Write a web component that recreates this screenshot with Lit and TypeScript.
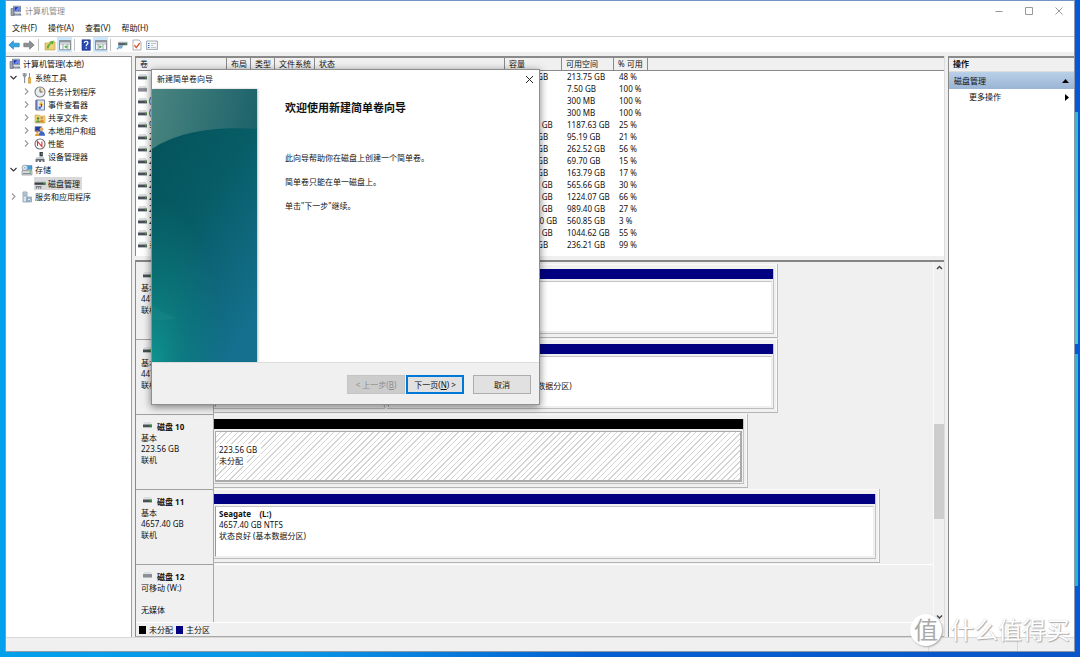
import { LitElement, html, css, svg, nothing } from "lit";
import { customElement, property } from "lit/decorators.js";

const icon = (body: unknown) => svg`<svg viewBox="0 0 12 12" width="12" height="12" aria-hidden="true">${body}</svg>`;

const drive = (online = true) => svg`<svg viewBox="0 0 9 6" width="9" height="6" aria-hidden="true">
  <path d="M1 0h7l1 2.5H0z" fill="#dcdfe2"/><path d="M0 2.5h9V5H0z" fill="#4a4f55"/><path d="M0 5h9v1H0z" fill="#b8bcc0"/>
  ${online ? svg`<path d="M7 2.7h1.6v1.8H7z" fill="#2fb52f"/>` : svg`<path d="M0 2.5h9V5H0z" fill="#8a8e94"/>`}</svg>`;

const icons: Record<string, unknown> = {
  computer: icon(svg`<path d="M1 3.5h3v7H1z" fill="#9aa7b8" stroke="#5b6675" stroke-width=".6"/><path d="M3.5 1.2h7v5.6h-7z" fill="#c9cede" stroke="#5a6680" stroke-width=".7"/><path d="M4.5 2.1h5v3.8h-5z" fill="#1f36b8"/><path d="M5 5.5 8.5 2.1h1v2L8 5.9z" fill="#6f8df0"/><path d="M4 8.2h6.5l1 2.3H3z" fill="#707989"/><path d="M5 8.8h4.6" stroke="#dde"/>`),
  tools: icon(svg`<path d="M3.6 1v4M2.3 1.2v2.2L3.6 5 5 3.4V1.2M3.6 5v6" stroke="#8c929c" stroke-width="1.2" fill="none"/><path d="M8.5 1v5" stroke="#8a8f98" stroke-width="1"/><path d="M7.4 5.6h2.2v5.6H7.4z" fill="#f2b233" stroke="#b87d14" stroke-width=".5"/>`),
  clock: icon(svg`<circle cx="6" cy="6" r="5" fill="#e9edf2" stroke="#7c7f86" stroke-width="1.1"/><path d="M6 2a4 4 0 0 1 4 4H6z" fill="#f3dfaa"/><path d="M6 2.5V6h2.6" stroke="#555" stroke-width=".9" fill="none"/>`),
  events: icon(svg`<path d="M2 1h8.5v10H2z" fill="#dfe5f5" stroke="#56648f" stroke-width=".8"/><path d="M1.5 1h2v10h-2z" fill="#6676ac"/><path d="M7 2.2 9.3 6H4.8z" fill="#f2c12e"/><path d="M7.4 5v3.2" stroke="#cf2222" stroke-width="1.3"/><circle cx="5.7" cy="8.7" r="1.3" fill="#3569ca"/>`),
  shared: icon(svg`<path d="M1 3h4l1 1h5v7H1z" fill="#efcf74" stroke="#c9a64a" stroke-width=".6"/><circle cx="4" cy="6.4" r="1.2" fill="#3d8a3f"/><path d="M2 10.4c0-3 4-3 4 0z" fill="#4aa04c"/><circle cx="7.8" cy="6" r="1.2" fill="#c98f65"/><path d="M5.9 10.4c0-3.4 4-3.4 4 0z" fill="#d4883c"/>`),
  users: icon(svg`<path d="M1 1.5h6.5v5H1z" fill="#27409f" stroke="#8794b0" stroke-width=".7"/><circle cx="7.5" cy="4.2" r="1.9" fill="#e2ab6d"/><path d="M4.6 10.8c0-6 6.4-6 6.4 0z" fill="#3e63c8"/><circle cx="3.3" cy="6.8" r="1.3" fill="#c98d58"/><path d="M1 11c0-3.6 4.5-3.6 4.5 0z" fill="#d7a13a"/>`),
  perf: icon(svg`<circle cx="6" cy="6" r="5" fill="#fff" stroke="#6f6f75" stroke-width="1.1"/><path d="M3.5 8v-4.500l4.400 5v-5" stroke="#d03434" stroke-width="1.1" fill="none"/>`),
  devices: icon(svg`<path d="M5.5 1h3.4v4.4H5.5z" fill="#3b4048"/><path d="M7.8 2v2" stroke="#41c141" stroke-width="1"/><path d="M2.5 6h7.3l.7 2h-9z" fill="#c8ccd2"/><path d="M1.6 8h8.9v2.9H8.6V9.4H7.2v1.5H5V9.4H3.6v1.5h-2z" fill="#686d75"/>`),
  storage: icon(svg`<path d="M5 1.500h6v4H5z" fill="#3f9bd6" stroke="#5a7f9c" stroke-width=".5"/><circle cx="3.800" cy="3.800" r="2.800" fill="#d7e6f0" stroke="#75828c" stroke-width=".6"/><circle cx="3.800" cy="3.800" r=".8" fill="#8aa"/><path d="M1 6.500h10V11H1z" fill="#d4d7da" stroke="#7b8086" stroke-width=".6"/><path d="M2 9.500h8" stroke="#81868c" stroke-width=".9"/><path d="M9.300 7.200v1.400" stroke="#3bb83b" stroke-width="1.300"/>`),
  disk: icon(svg`<path d="M2 3.2h9L11.600 4.500H.6z" fill="#c3c7cb"/><path d="M.6 4.500h11v2.300H.6z" fill="#3b4045"/><path d="M9.600 4.800h1.500v1.600H9.600z" fill="#2fb52f"/><path d="M1.800 8h5.600v2.800H6.100V9.200H5.100v1.600H4V9.200H3v1.600H1.800z" fill="#7b8087"/>`),
  services: icon(svg`<path d="M2 1h4v10H2z" fill="#dbe4ec" stroke="#71879c" stroke-width=".7"/><path d="M2.7 3h2.6M2.7 4.8h2.6" stroke="#6d8eb0" stroke-width=".8"/><path d="M6 6h4.5v5H6z" fill="#b9cfe2" stroke="#6a86a3" stroke-width=".6"/><circle cx="8" cy="8.5" r="1.3" fill="#fff" stroke="#54789c" stroke-width=".6"/>`),
  back: icon(svg`<path d="M.8 6 5.4 1.800v2.400h5.800v3.600H5.400v2.400z" fill="#35a5e0" stroke="#1877b4" stroke-width=".6"/>`),
  forward: icon(svg`<path d="M11.2 6 6.600 1.800v2.400H.8v3.600h5.800v2.400z" fill="#8d8f92" stroke="#66686b" stroke-width=".6"/>`),
  folderUp: icon(svg`<path d="M1 4h3.5l1-1H11v8H1z" fill="#ecd07a" stroke="#b5983a" stroke-width=".6"/><path d="M2.800 9.500c0-3 1.400-4.600 3.700-5.200L5.800 2.700l4-1.200-1 3.900-1-1C5.800 5.600 4.700 7 4.700 9.500z" fill="#58ab35"/>`),
  paneLeft: icon(svg`<path d="M.5 1.500h11v9.300H.5z" fill="#f3f5f6" stroke="#7d858c" stroke-width=".9"/><path d="M.5 1.500h11v2H.5z" fill="#8f979e"/><path d="M1 5h10" stroke="#a3aab0" stroke-width=".8"/><path d="M4 5v5.500M8.800 5v5.500" stroke="#8f979e" stroke-width=".8"/><path d="M7.800 6.200v3.200L5.200 7.800z" fill="#35a535"/>`),
  paneRight: icon(svg`<path d="M.5 1.500h11v9.300H.5z" fill="#f3f5f6" stroke="#7d858c" stroke-width=".9"/><path d="M.5 1.500h11v2H.5z" fill="#8f979e"/><path d="M1 5h10" stroke="#a3aab0" stroke-width=".8"/><path d="M3.200 5v5.500M8 5v5.500" stroke="#8f979e" stroke-width=".8"/><path d="M4.400 6.200v3.200L7 7.800z" fill="#35a535"/>`),
  help: icon(svg`<path d="M2 .8h8.3v10.5H2z" fill="#2b49b5" stroke="#192f82" stroke-width=".6"/><path d="M4.4 4c0-2.4 3.6-2.2 3.5-.1C7.900 5.300 6.200 5.200 6.200 7.200M6.200 8.500v1.300" stroke="#fff" stroke-width="1.200" fill="none"/>`),
  connect: icon(svg`<path d="M2.500 3h8.800v3.200H2z" fill="#59616a"/><path d="M2.600 2.800h8.600L11 4H3z" fill="#a9b4bd"/><path d="M9.300 4.300h1.300v1.300H9.300z" fill="#37bd37"/><path d="M.8 10.200 4.500 7M3 6.800h3.400l-1 2H2.500z" stroke="#6ea5cc" stroke-width="1.200" fill="#9fc6e2"/>`),
  check: icon(svg`<path d="M2 1h6l2 2v8H2z" fill="#fff" stroke="#8b8f95" stroke-width=".7"/><path d="M3.400 6.200 5.200 8.600 8.800 4" stroke="#e0562b" stroke-width="1.300" fill="none"/>`),
  props: icon(svg`<path d="M.6 2h10.800v8.400H.6z" fill="#f5f8fb" stroke="#8a9299" stroke-width=".8"/><path d="M2 4.500h1.500M2 6.500h1.500M2 8.500h1.500" stroke="#3674bb" stroke-width="1"/><path d="M5 4.500h5M5 6.500h2.500M5 8.500h5" stroke="#b0b6bb" stroke-width=".8"/>`),
};

interface Node { label: string; icon: string; open?: boolean; leaf?: boolean; selected?: boolean; children?: Node[]; }

const tree: Node = {
  label: "计算机管理(本地)", icon: "computer", open: true,
  children: [
    { label: "系统工具", icon: "tools", open: true, children: [
      { label: "任务计划程序", icon: "clock" },
      { label: "事件查看器", icon: "events" },
      { label: "共享文件夹", icon: "shared" },
      { label: "本地用户和组", icon: "users" },
      { label: "性能", icon: "perf" },
      { label: "设备管理器", icon: "devices", leaf: true },
    ] },
    { label: "存储", icon: "storage", open: true, children: [
      { label: "磁盘管理", icon: "disk", leaf: true, selected: true },
    ] },
    { label: "服务和应用程序", icon: "services" },
  ],
};

const volumes: [string, string, string, string][] = [
  ["", "446.00 GB", "213.75 GB", "48 %"],
  ["", "7.50 GB", "7.50 GB", "100 %"],
  ["(", "300 MB", "300 MB", "100 %"],
  ["(", "300 MB", "300 MB", "100 %"],
  ["9", "4657.40 GB", "1187.63 GB", "25 %"],
  ["2", "446.50 GB", "95.19 GB", "21 %"],
  ["2", "465.76 GB", "262.52 GB", "56 %"],
  ["2", "465.76 GB", "69.70 GB", "15 %"],
  ["2", "931.51 GB", "163.79 GB", "17 %"],
  ["2", "1863.01 GB", "565.66 GB", "30 %"],
  ["2", "1863.01 GB", "1224.07 GB", "66 %"],
  ["2", "3726.02 GB", "989.40 GB", "27 %"],
  ["2", "16764.00 GB", "560.85 GB", "3 %"],
  ["2", "1863.01 GB", "1044.62 GB", "55 %"],
  ["系", "238.46 GB", "236.21 GB", "99 %"],
];

interface Part { name?: string; size: string; status: string; free?: boolean; share: number; }
interface Disk { title: string; lines: string[]; online: boolean; width?: number; parts: Part[]; }

const disks: Disk[] = [
  { title: "磁盘 8", lines: ["基本", "447.13 GB", "联机"], online: true, width: 78.5,
    parts: [{ size: "447.13 GB NTFS", status: "状态良好 (基本数据分区)", share: 1 }] },
  { title: "磁盘 9", lines: ["基本", "447.13 GB", "联机"], online: true, width: 78.5,
    parts: [
      { size: "300 MB", status: "状态良好 (EFI 系统分区)", share: 171 },
      { name: "(C:)", size: "446.50 GB NTFS", status: "状态良好 (启动, 页面文件, 故障转储, 基本数据分区)", share: 388 },
    ] },
  { title: "磁盘 10", lines: ["基本", "223.56 GB", "联机"], online: true, width: 74.3,
    parts: [{ size: "223.56 GB", status: "未分配", free: true, share: 1 }] },
  { title: "磁盘 11", lines: ["基本", "4657.40 GB", "联机"], online: true, width: 92.6,
    parts: [{ name: "Seagate    (L:)", size: "4657.40 GB NTFS", status: "状态良好 (基本数据分区)", share: 1 }] },
  { title: "磁盘 12", lines: ["可移动 (W:)", "", "无媒体"], online: false, parts: [] },
];

const shared = css`
  :host, *, *::before, *::after { box-sizing: border-box; }
  button { font: inherit; color: inherit; border: 0; padding: 0; margin: 0; background: none; }
  svg { display: block; flex: none; }
`;

@customElement("console-tree")
class ConsoleTree extends LitElement {
  static styles = [shared, css`
    :host { display: block; background: #fff; border-top: 1px solid #8c8c8c; border-right: 1px solid #a0a0a0; overflow: hidden; }
    ul { list-style: none; margin: 0; padding: 0; }
    .group { padding-top: 1px; }
    .row { display: flex; align-items: center; height: 13px; padding-left: 3px; line-height: 13px; white-space: nowrap; }
    .level-2 { padding-left: 16px; }
    .toggle { width: 9px; margin-right: 3px; height: 9px; display: grid; place-items: center; }
    .item { display: flex; align-items: center; gap: 2px; height: 13px; padding-right: 2px; }
    .selected { background: #d9d9d9; }
  `];
  private node(n: Node, level: number): unknown {
    const arrow = n.open ? svg`<path d="M1.500 3 4.500 6 7.500 3" />` : svg`<path d="M3 1.500 6 4.500 3 7.500" />`;
    return html`<li role="treeitem">
      <div class="row level-${level}">
        ${level ? html`<button class="toggle" aria-label=${n.label} ?disabled=${n.leaf}>${n.leaf ? nothing
          : html`<svg viewBox="0 0 9 9" width="9" height="9" fill="none" stroke=${n.open ? "#333" : "#999"} stroke-width="1.1">${arrow}</svg>`}</button>` : nothing}
        <span class="item ${n.selected ? "selected" : ""}">${icons[n.icon]}${n.label}</span>
      </div>
      ${n.children ? html`<ul class="group" role="group">${n.children.map((c) => this.node(c, level + 1))}</ul>` : nothing}
    </li>`;
  }
  render() { return html`<ul role="tree">${this.node(tree, 0)}</ul>`; }
}

@customElement("volume-list")
class VolumeList extends LitElement {
  static styles = [shared, css`
    :host { display: block; background: #fff; border-top: 2px solid #8a8a8a; border-left: 1px solid #8a8a8a; padding-bottom: 5px; overflow: hidden; }
    table { width: 100%; table-layout: fixed; border-collapse: separate; border-spacing: 0; line-height: 12px; }
    th { height: 13px; padding: 0 0 0 4px; font-weight: 400; text-align: left; background: #f0f0f0; border-right: 1px solid #8a8a8a; border-bottom: 1px solid #8a8a8a; white-space: nowrap; }
    th:last-child { border-right: 0; }
    td { height: 12px; padding: 0 0 0 5px; white-space: nowrap; }
    td:first-child { padding-left: 2px; }
    .name { display: flex; align-items: center; gap: 2px; }
    .w-name { width: 91px; } .w-short { width: 24px; } .w-fs { width: 40px; } .w-state { width: 190px; }
    .w-cap { width: 57px; } .w-free { width: 52px; } .w-pct { width: 34px; }
  `];
  render() {
    return html`<table>
      <colgroup><col class="w-name"><col class="w-short"><col class="w-short"><col class="w-fs"><col class="w-state"><col class="w-cap"><col class="w-free"><col class="w-pct"><col></colgroup>
      <thead><tr>${["卷", "布局", "类型", "文件系统", "状态", "容量", "可用空间", "% 可用", ""].map((h) => html`<th>${h}</th>`)}</tr></thead>
      <tbody>${volumes.map(([name, cap, free, pct], i) => html`<tr>
        <td><span class="name">${drive(i !== 1)}<span>${name}</span></span></td>
        <td></td><td></td><td></td><td></td><td>${cap}</td><td>${free}</td><td>${pct}</td><td></td></tr>`)}</tbody>
    </table>`;
  }
}

@customElement("disk-map")
class DiskMap extends LitElement {
  static styles = [shared, css`
    :host { display: flex; flex-direction: column; min-height: 0; background: #f0f0f0; border-top: 2px solid #858585; border-left: 1px solid #8a8a8a; border-bottom: 1px solid #a8a8a8; }
    .view { flex: 1; min-height: 0; display: grid; grid-template-columns: 1fr 11px; }
    .disks { min-height: 0; overflow: hidden; padding-top: 2px; }
    .disk { display: grid; grid-template-columns: 78px 1fr; height: 75px; }
    .disk + .disk .label { border-top: 1px solid #a0a0a0; }
    .disk:last-child .graph { border-top: 1px solid #fff; }
    .label { padding: 6px 0 0 5px; border-right: 1px solid #a8a8a8; line-height: 11px; white-space: nowrap; }
    .disk + .disk .label { padding-top: 5px; }
    .title { display: flex; align-items: center; gap: 5px; height: 12px; padding-left: 2px; font-weight: 700; }
    .title svg { margin-bottom: 3px; }
    .line { height: 11px; }
    .frame { display: flex; gap: 2px; height: 74px; padding: 5px 3px 3px 0; border-right: 1px solid #bcbcbc; border-bottom: 1px solid #b4b4b4; box-shadow: inset -1px 1px #fafafa; }
    .part { min-width: 0; flex-basis: 0; display: flex; flex-direction: column; gap: 2px; border-right: 1px solid #c4c4c4; border-bottom: 1px solid #bcbcbc; }
    .bar { height: 10px; background: #000080; }
    .free .bar { background: #000; }
    .box { flex: 1; margin: 0 1px 1px 1px; padding: 1px 0 0 3px; background: #fff; border: 1px solid #c4c4c4; border-left-color: #999; border-right-color: #eee; border-bottom-color: #eee; line-height: 11px; white-space: pre; overflow: hidden; }
    .free .box { border: 1px solid #aaa; border-right-width: 2px; border-bottom-width: 2px; background: repeating-linear-gradient(135deg, #fff 0 3px, #d4d4d4 3px 4px); }
    .name { height: 11px; font-weight: 700; }
    .free .line { width: max-content; background: #fff; padding-right: 4px; }
    .scroll { display: flex; flex-direction: column; align-items: center; justify-content: space-between; background: #f0f0f0; border-left: 1px solid #fafafa; padding: 2px 0; }
    .track { flex: 1; align-self: stretch; display: grid; grid-template-rows: 151fr 94fr 93fr; }
    .thumb { grid-row: 2; background: #cdcdcd; }
    .legend { display: flex; align-items: center; gap: 3px; height: 14px; padding-left: 3px; border-top: 1px solid #fff; line-height: 13px; }
    .swatch { width: 7px; height: 8px; background: #000; }
    .swatch.primary { background: #000080; }
  `];
  private part(p: Part) {
    return html`<div class="part ${p.free ? "free" : ""}" style="flex-grow:${p.share}">
      <div class="bar"></div>
      <div class="box"><div class="name">${p.name ?? ""}</div><div class="line">${p.size}</div><div class="line">${p.status}</div></div>
    </div>`;
  }
  render() {
    return html`<div class="view">
        <div class="disks">${disks.map((d) => html`<section class="disk">
          <div class="label"><div class="title">${drive(d.online)}<span>${d.title}</span></div>${d.lines.map((l) => html`<div class="line">${l}</div>`)}</div>
          <div class="graph">${d.width ? html`<div class="frame" style="width:${d.width}%">${d.parts.map((p) => this.part(p))}</div>` : nothing}</div>
        </section>`)}</div>
        <div class="scroll">
          <button aria-label="向上滚动"><svg viewBox="0 0 7 7" width="7" height="7" fill="none" stroke="#444" stroke-width="1.4"><path d="M1 5 3.500 2.500 6 5"/></svg></button>
          <div class="track"><div class="thumb"></div></div>
          <button aria-label="向下滚动"><svg viewBox="0 0 7 7" width="7" height="7" fill="none" stroke="#444" stroke-width="1.4"><path d="M1 2.500 3.500 5 6 2.500"/></svg></button>
        </div>
      </div>
      <div class="legend"><span class="swatch"></span>未分配<span class="swatch primary"></span>主分区</div>`;
  }
}

@customElement("volume-wizard")
class VolumeWizard extends LitElement {
  @property() heading = "欢迎使用新建简单卷向导";
  static styles = [shared, css`
    :host { display: flex; flex-direction: column; background: #fff; border: 1px solid #8f8f8f; box-shadow: 0 2px 8px rgba(0, 0, 0, .5); }
    header { display: flex; align-items: center; justify-content: space-between; height: 19px; padding: 0 5px; line-height: 17px; }
    header span { height: 19px; }
    .main { flex: 1; display: grid; grid-template-columns: 105px 1fr; min-height: 0; }
    .art { width: 100%; height: 100%; box-shadow: 1px 0 2px #bbb; }
    .copy { padding: 11px 28px; line-height: 12px; }
    h1 { margin: 0 0 36px; font-size: 11px; line-height: 16px; font-weight: 700; }
    p { margin: 0 0 12px; }
    footer { display: flex; align-items: center; justify-content: flex-end; height: 42px; padding: 2px 8px 0 0; background: #f0f0f0; border-top: 1px solid #dcdcdc; }
    .btn { width: 58px; height: 19px; background: #e1e1e1; border: 1px solid #adadad; line-height: 15px; white-space: pre; }
    .btn:disabled { background: #ccc; border-color: #c4c4c4; color: #8c8c8c; }
    .primary { margin: 0 9px 0 1px; border: 2px solid #0078d7; }
  `];
  render() {
    return html`<header><span>新建简单卷向导</span>
        <button aria-label="关闭"><svg viewBox="0 0 9 9" width="9" height="9" stroke="#222" stroke-width="1"><path d="M1 1 8 8M8 1 1 8"/></svg></button></header>
      <div class="main">
        <svg class="art" viewBox="0 0 106 274" preserveAspectRatio="none" aria-hidden="true">
          <defs>
            <linearGradient id="top" x1="0" y1="0" x2="1" y2=".5"><stop offset="0" stop-color="#4a8580"/><stop offset="1" stop-color="#155c67"/></linearGradient>
            <linearGradient id="deep" x1="0" y1="0" x2=".7" y2="1"><stop offset="0" stop-color="#04535a"/><stop offset=".45" stop-color="#075c66"/><stop offset="1" stop-color="#14708e"/></linearGradient>
            <radialGradient id="glow" cx="0" cy="1" r=".7"><stop offset="0" stop-color="#0f9390"/><stop offset=".5" stop-color="#0c8582" stop-opacity=".5"/><stop offset="1" stop-color="#0c8080" stop-opacity="0"/></radialGradient>
          </defs>
          <path d="M0 0h106v274H0z" fill="url(#top)"/>
          <path d="M0 60C24 44 60 37 106 40v234H0z" fill="url(#deep)"/>
          <path d="M0 60C24 44 60 37 106 40v234H0z" fill="url(#glow)"/>
          <path d="M0 217q12 9 26 13-14 3-26 2z" fill="#fff" opacity=".03"/>
        </svg>
        <div class="copy"><h1>${this.heading}</h1><p>此向导帮助你在磁盘上创建一个简单卷。</p><p>简单卷只能在单一磁盘上。</p><p>单击"下一步"继续。</p></div>
      </div>
      <footer><button class="btn" disabled>&lt; 上一步(<u>B</u>)</button><button class="btn primary">下一页(<u>N</u>) &gt;</button><button class="btn">取消</button></footer>`;
  }
}

@customElement("app-root")
class AppRoot extends LitElement {
  static styles = [shared, css`
    :host {
      display: block; position: relative; height: 100vh; padding: 0 5px 5px; overflow: hidden;
      font: 8px/12px "Noto Sans", "Noto Sans CJK SC", sans-serif; color: #111;
      background:
        linear-gradient(#2fb9cf, #45cbd0) right 2px top 112px / 3px 232px no-repeat,
        linear-gradient(#2fb9cf, #22b8cf) right 2px top 354px / 3px 232px no-repeat,
        linear-gradient(90deg, #03a0ec, #0a94e4 28%, #0560d2 55%, #0a55c8) left bottom / 100% 6px no-repeat,
        linear-gradient(90deg, #03a0ee 50%, #0558d8 50%);
    }
    .window { display: flex; flex-direction: column; height: 100%; background: #f0f0f0; border: 1px solid #8b9aab; border-top-color: #7094c4; }
    .titlebar { display: flex; align-items: center; height: 19px; padding: 0 11px 0 4px; background: #fff; color: #8c8c8c; }
    .titlebar .caption { display: flex; align-items: center; gap: 3px; flex: 1; }
    .controls { display: flex; gap: 22px; }
    .menu { display: flex; gap: 11px; height: 17px; padding: 0 6px; background: #fff; border-bottom: 1px solid #cfcfcf; }
    .toolbar { display: flex; align-items: center; height: 15px; padding-left: 0; background: #fff; }
    .tool { width: 15px; height: 15px; display: grid; place-items: center; }
    .tool.on { background: #cce8ff; }
    .sep { width: 1px; height: 12px; margin: 0 3px 0 2px; background: #c0c0c0; }
    .body { flex: 1; min-height: 0; display: grid; grid-template-columns: 126px 1fr 126px; gap: 3px; padding-top: 4px; }
    .center { display: grid; grid-template-rows: auto 1fr; gap: 4px; min-width: 0; min-height: 0; border-right: 1px solid #dcdcdc; }
    .actions { background: #fff; border-top: 2px solid #8a8a8a; border-left: 1px solid #8a8a8a; }
    .actions h2 { margin: 0; padding-left: 4px; height: 14px; font-size: 8px; line-height: 12px; font-weight: 700; background: #f0f0f0; border-bottom: 1px solid #ddd; }
    .section, .more { display: flex; align-items: center; justify-content: space-between; width: 100%; height: 16px; padding: 0 5px 0 5px; }
    .section { height: 17px; background: linear-gradient(#bad0e9, #9ab4d4); }
    .more { padding-left: 20px; }
    .status { height: 14px; border-top: 1px solid #d8d8d8; display: grid; grid-template-columns: 1fr 89px 57px; }
    .status span + span { border-left: 1px solid #d8d8d8; }
    volume-wizard { position: absolute; left: 151px; top: 69px; width: 389px; height: 336px; }
    .mark { position: absolute; right: 10px; bottom: 11px; display: flex; align-items: center; gap: 8px; color: #fff; font-size: 24px; line-height: 32px; text-shadow: 1px 1px 1px #aaa, 0 0 1px #bbb; pointer-events: none; }
    .seal { width: 32px; height: 32px; border-radius: 50%; background: #fff; color: #aaa; box-shadow: 1px 1px 2px #aaa; text-align: center; text-shadow: none; }
  `];
  private tool(name: string, label: string, on = false) {
    return html`<button class="tool ${on ? "on" : ""}" aria-label=${label}>${icons[name]}</button>`;
  }
  render() {
    const sep = html`<span class="sep"></span>`;
    return html`
      <div class="window">
        <div class="titlebar"><span class="caption">${icons.computer}计算机管理</span>
          <span class="controls">
            <button aria-label="最小化"><svg viewBox="0 0 8 8" width="8" height="8" stroke="#999" fill="none"><path d="M.5 4.500h7"/></svg></button>
            <button aria-label="最大化"><svg viewBox="0 0 8 8" width="8" height="8" stroke="#999" fill="none"><path d="M.5.500h7v7h-7z"/></svg></button>
            <button aria-label="关闭"><svg viewBox="0 0 8 8" width="8" height="8" stroke="#999" fill="none"><path d="M.5.5 7.500 7.500M7.500.5.5 7.500"/></svg></button>
          </span></div>
        <nav class="menu">${["文件(F)", "操作(A)", "查看(V)", "帮助(H)"].map((m) => html`<button>${m}</button>`)}</nav>
        <div class="toolbar">
          ${this.tool("back", "后退")}${this.tool("forward", "前进")}${sep}
          ${this.tool("folderUp", "向上")}${this.tool("paneLeft", "控制台树", true)}${sep}
          ${this.tool("help", "帮助")}${this.tool("paneRight", "操作窗格", true)}${sep}
          ${this.tool("connect", "连接")}${this.tool("check", "检查")}${this.tool("props", "属性")}
        </div>
        <div class="body">
          <console-tree></console-tree>
          <main class="center"><volume-list></volume-list><disk-map></disk-map></main>
          <aside class="actions"><h2>操作</h2>
            <button class="section">磁盘管理<svg viewBox="0 0 7 4" width="7" height="4"><path d="M0 4 3.500 0 7 4z"/></svg></button>
            <button class="more">更多操作<svg viewBox="0 0 4 7" width="4" height="7"><path d="M0 0 4 3.500 0 7z"/></svg></button>
          </aside>
        </div>
        <div class="status"><span></span><span></span><span></span></div>
      </div>
      <volume-wizard></volume-wizard>
      <div class="mark"><span class="seal">值</span><span>什么值得买</span></div>`;
  }
}
